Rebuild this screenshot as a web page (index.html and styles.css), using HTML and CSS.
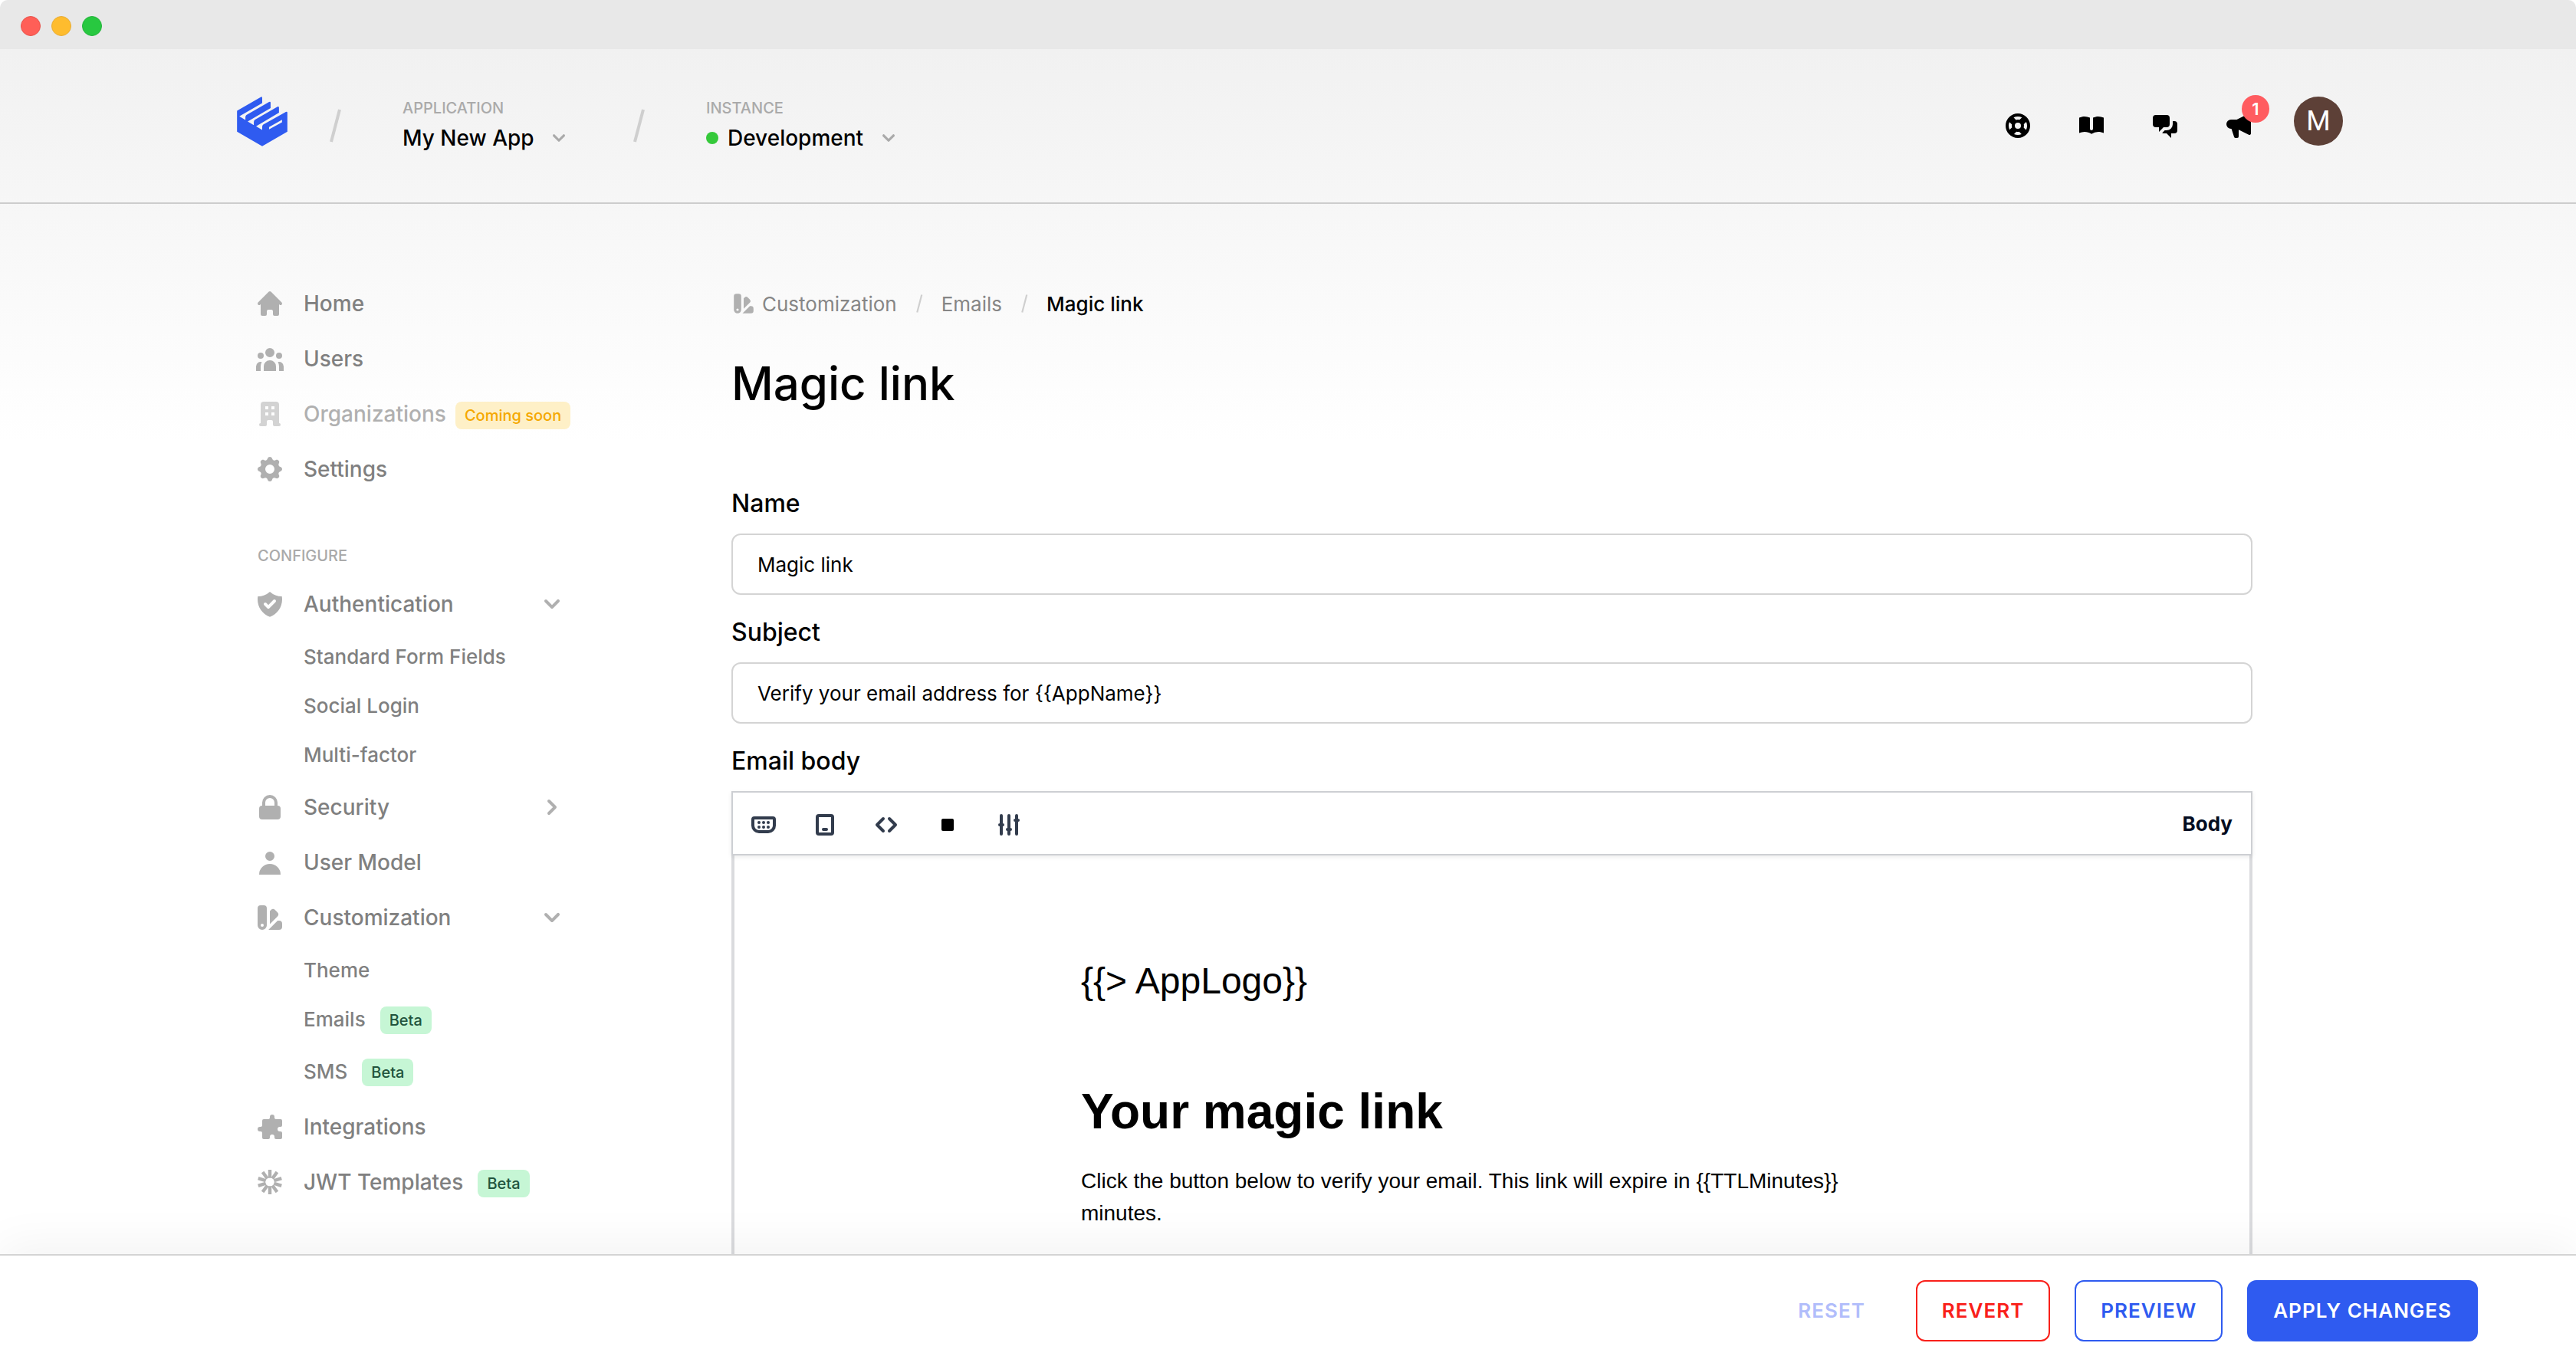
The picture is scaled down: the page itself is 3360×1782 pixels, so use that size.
FILE: index.html
```html
<!DOCTYPE html>
<html lang="en">
<head>
<meta charset="utf-8">
<title>Magic link</title>
<meta name="viewport" content="width=device-width, initial-scale=1">
<link rel="stylesheet" href="styles.css">
</head>
<body>
<svg class="sprite" aria-hidden="true">
  <symbol id="i-home" viewBox="0 0 20 20"><path d="M10.707 2.293a1 1 0 00-1.414 0l-7 7a1 1 0 001.414 1.414L4 10.414V17a1 1 0 001 1h2a1 1 0 001-1v-2a1 1 0 011-1h2a1 1 0 011 1v2a1 1 0 001 1h2a1 1 0 001-1v-6.586l.293.293a1 1 0 001.414-1.414l-7-7z"/></symbol>
  <symbol id="i-users" viewBox="0 0 20 20"><path d="M13 6a3 3 0 11-6 0 3 3 0 016 0zM18 8a2 2 0 11-4 0 2 2 0 014 0zM14 15a4 4 0 00-8 0v3h8v-3zM6 8a2 2 0 11-4 0 2 2 0 014 0zM16 18v-3a5.972 5.972 0 00-.75-2.906A3.005 3.005 0 0119 15v3h-3zM4.75 12.094A5.973 5.973 0 004 15v3H1v-3a3 3 0 013.75-2.906z"/></symbol>
  <symbol id="i-office" viewBox="0 0 20 20"><path fill-rule="evenodd" d="M4 4a2 2 0 012-2h8a2 2 0 012 2v12a1 1 0 110 2h-3a1 1 0 01-1-1v-2a1 1 0 00-1-1H9a1 1 0 00-1 1v2a1 1 0 01-1 1H4a1 1 0 110-2V4zm3 1h2v2H7V5zm2 4H7v2h2V9zm2-4h2v2h-2V5zm2 4h-2v2h2V9z"/></symbol>
  <symbol id="i-cog" viewBox="0 0 20 20"><path fill-rule="evenodd" d="M11.49 3.17c-.38-1.56-2.6-1.56-2.98 0a1.532 1.532 0 01-2.286.948c-1.372-.836-2.942.734-2.106 2.106.54.886.061 2.042-.947 2.287-1.561.379-1.561 2.6 0 2.978a1.532 1.532 0 01.947 2.287c-.836 1.372.734 2.942 2.106 2.106a1.532 1.532 0 012.287.947c.379 1.561 2.6 1.561 2.978 0a1.533 1.533 0 012.287-.947c1.372.836 2.942-.734 2.106-2.106a1.533 1.533 0 01.947-2.287c1.561-.379 1.561-2.6 0-2.978a1.532 1.532 0 01-.947-2.287c.836-1.372-.734-2.942-2.106-2.106a1.532 1.532 0 01-2.287-.947zM10 13a3 3 0 100-6 3 3 0 000 6z"/></symbol>
  <symbol id="i-shield" viewBox="0 0 20 20"><path fill-rule="evenodd" d="M2.166 4.999A11.954 11.954 0 0010 1.944 11.954 11.954 0 0017.834 5c.11.65.166 1.32.166 2.001 0 5.225-3.34 9.67-8 11.317C5.34 16.67 2 12.225 2 7c0-.682.057-1.35.166-2.001zm11.541 3.708a1 1 0 00-1.414-1.414L9 10.586 7.707 9.293a1 1 0 00-1.414 1.414l2 2a1 1 0 001.414 0l4-4z"/></symbol>
  <symbol id="i-lock" viewBox="0 0 20 20"><path fill-rule="evenodd" d="M5 9V7a5 5 0 0110 0v2a2 2 0 012 2v5a2 2 0 01-2 2H5a2 2 0 01-2-2v-5a2 2 0 012-2zm8-2v2H7V7a3 3 0 016 0z"/></symbol>
  <symbol id="i-user" viewBox="0 0 20 20"><path d="M10 9a3 3 0 100-6 3 3 0 000 6zm-7 9a7 7 0 1114 0H3z"/></symbol>
  <symbol id="i-swatch" viewBox="0 0 20 20"><path fill-rule="evenodd" d="M4 2a2 2 0 00-2 2v11a3 3 0 106 0V4a2 2 0 00-2-2H4zm1 14a1 1 0 100-2 1 1 0 000 2zm5-1.757l4.9-4.9a2 2 0 000-2.828L13.485 5.1a2 2 0 00-2.828 0L10 5.757v8.486zM16 18H9.071l6-6H16a2 2 0 012 2v2a2 2 0 01-2 2z"/></symbol>
  <symbol id="i-puzzle" viewBox="0 0 20 20"><path d="M10 3.5a1.5 1.5 0 013 0V4a1 1 0 001 1h3a1 1 0 011 1v3a1 1 0 01-1 1h-.5a1.5 1.5 0 000 3h.5a1 1 0 011 1v3a1 1 0 01-1 1h-3a1 1 0 01-1-1v-.5a1.5 1.5 0 00-3 0v.5a1 1 0 01-1 1H6a1 1 0 01-1-1v-3a1 1 0 00-1-1h-.5a1.5 1.5 0 010-3H4a1 1 0 001-1V6a1 1 0 011-1h3a1 1 0 001-1v-.5z"/></symbol>
  <symbol id="i-burst" viewBox="-10 -10 20 20"><g id="spokes" stroke="currentColor" stroke-width="2.2"><path d="M0-8V-2.6M0 8V2.6"/><path transform="rotate(36)" d="M0-8V-2.8M0 8V2.8"/><path transform="rotate(72)" d="M0-8V-2.8M0 8V2.8"/><path transform="rotate(108)" d="M0-8V-2.8M0 8V2.8"/><path transform="rotate(144)" d="M0-8V-2.8M0 8V2.8"/></g></symbol>
  <symbol id="i-down" viewBox="0 0 20 20"><path d="M5.293 7.293a1 1 0 011.414 0L10 10.586l3.293-3.293a1 1 0 111.414 1.414l-4 4a1 1 0 01-1.414 0l-4-4a1 1 0 010-1.414z"/></symbol>
  <symbol id="i-right" viewBox="0 0 20 20"><path d="M7.293 14.707a1 1 0 010-1.414L10.586 10 7.293 6.707a1 1 0 011.414-1.414l4 4a1 1 0 010 1.414l-4 4a1 1 0 01-1.414 0z"/></symbol>
  <symbol id="i-support" viewBox="0 0 20 20"><path fill-rule="evenodd" d="M18 10a8 8 0 11-16 0 8 8 0 0116 0zm-2 0c0 .993-.241 1.929-.668 2.754l-1.524-1.525a3.997 3.997 0 00.078-2.183l1.562-1.562C15.802 8.249 16 9.1 16 10zm-5.165 3.913l1.58 1.58A5.98 5.98 0 0110 16a5.976 5.976 0 01-2.516-.552l1.562-1.562a4.006 4.006 0 001.789.027zm-4.677-2.796a4.002 4.002 0 01-.041-2.08l-.08.08-1.53-1.533A5.98 5.98 0 004 10c0 .954.223 1.856.619 2.657l1.54-1.54zm1.088-6.45A5.974 5.974 0 0110 4c.954 0 1.856.223 2.657.619l-1.54 1.54a4.002 4.002 0 00-2.346.033L7.246 4.668zM12 10a2 2 0 11-4 0 2 2 0 014 0z"/></symbol>
  <symbol id="i-book" viewBox="0 0 20 20"><path d="M9 4.804A7.968 7.968 0 005.5 4c-1.255 0-2.443.29-3.5.804v10A7.969 7.969 0 015.5 14c1.669 0 3.218.51 4.5 1.385A7.962 7.962 0 0114.5 14c1.255 0 2.443.29 3.5.804v-10A7.968 7.968 0 0014.5 4c-1.255 0-2.443.29-3.5.804V12a1 1 0 11-2 0V4.804z"/></symbol>
  <symbol id="i-chat" viewBox="0 0 20 20"><path d="M2 5a2 2 0 012-2h7a2 2 0 012 2v4a2 2 0 01-2 2H9l-3 3v-3H4a2 2 0 01-2-2V5z"/><path d="M15 7v2a4 4 0 01-4 4H9.828l-1.766 1.767c.28.149.599.233.938.233h2l3 3v-3h2a2 2 0 002-2V9a2 2 0 00-2-2h-1z"/></symbol>
  <symbol id="i-news" viewBox="0 0 20 20"><path d="M18 3a1 1 0 00-1.447-.894L8.763 6H5a3 3 0 000 6h.28l1.771 5.316A1 1 0 008 18h1a1 1 0 001-1v-4.382l6.553 3.276A1 1 0 0018 15V3z"/></symbol>
  <symbol id="i-slash" viewBox="0 0 16 44"><path d="M14 1L3 43" fill="none" stroke="currentColor" stroke-width="4"/></symbol>
</svg>

<div class="titlebar" aria-hidden="true">
  <span class="light light-red"></span><span class="light light-yellow"></span><span class="light light-green"></span>
</div>

<div class="page">
  <header class="header">
    <div class="container header-row">
      <div class="header-left">
        <a class="logo" href="#" aria-label="Dashboard home">
          <svg viewBox="57 47 198 196"><path fill-rule="evenodd" d="M57 103L150 49Q156 46 156 52V73L66 125L90 139V128Q90 122 94 119L183 68Q189 65 189 71V92L99 145L123 159V147Q123 141 127 138L216 87Q222 85 222 90V110L132 164L156 178V166Q156 160 160 157L249 107Q255 105 255 110V185L156 242L57 185ZM183 167V176L234 148V138Z"/></svg>
        </a>
        <div class="context">
          <svg class="slash"><use href="#i-slash"/></svg>
          <div class="picker">
            <label class="overline" for="app">APPLICATION</label>
            <div class="picker-value">
              <select id="app"><option>My New App</option></select>
              <svg class="picker-chevron"><use href="#i-down"/></svg>
            </div>
          </div>
          <svg class="slash"><use href="#i-slash"/></svg>
          <div class="picker">
            <label class="overline" for="instance">INSTANCE</label>
            <div class="picker-value">
              <span class="status"></span>
              <select id="instance"><option>Development</option></select>
              <svg class="picker-chevron"><use href="#i-down"/></svg>
            </div>
          </div>
        </div>
      </div>
      <div class="header-right">
        <nav class="tools" aria-label="Resources">
          <a href="#" aria-label="Support"><svg class="icon"><use href="#i-support"/></svg></a>
          <a href="#" aria-label="Documentation"><svg class="icon"><use href="#i-book"/></svg></a>
          <a href="#" aria-label="Community"><svg class="icon"><use href="#i-chat"/></svg></a>
          <a class="news" href="#" aria-label="What's new"><svg class="icon"><use href="#i-news"/></svg><span class="count">1</span></a>
        </nav>
        <button class="avatar" type="button">M</button>
      </div>
    </div>
  </header>

  <div class="container layout">
    <nav class="sidebar" aria-label="Main">
      <a class="item" href="#"><svg class="icon"><use href="#i-home"/></svg>Home</a>
      <a class="item" href="#"><svg class="icon"><use href="#i-users"/></svg>Users</a>
      <a class="item item-soon" href="#"><svg class="icon"><use href="#i-office"/></svg><span class="soon-name">Organizations</span><span class="badge badge-soon">Coming soon</span></a>
      <a class="item" href="#"><svg class="icon"><use href="#i-cog"/></svg>Settings</a>
      <h2 class="overline section">CONFIGURE</h2>
      <a class="item" href="#"><svg class="icon"><use href="#i-shield"/></svg>Authentication<svg class="icon toggle"><use href="#i-down"/></svg></a>
      <div class="sub">
        <a class="subitem" href="#">Standard Form Fields</a>
        <a class="subitem" href="#">Social Login</a>
        <a class="subitem" href="#">Multi-factor</a>
      </div>
      <a class="item" href="#"><svg class="icon"><use href="#i-lock"/></svg>Security<svg class="icon toggle"><use href="#i-right"/></svg></a>
      <a class="item" href="#"><svg class="icon"><use href="#i-user"/></svg>User Model</a>
      <a class="item" href="#"><svg class="icon"><use href="#i-swatch"/></svg>Customization<svg class="icon toggle"><use href="#i-down"/></svg></a>
      <div class="sub">
        <a class="subitem" href="#">Theme</a>
        <a class="subitem subitem-badged" href="#">Emails<span class="badge badge-beta">Beta</span></a>
        <a class="subitem subitem-badged" href="#">SMS<span class="badge badge-beta">Beta</span></a>
      </div>
      <a class="item" href="#"><svg class="icon"><use href="#i-puzzle"/></svg>Integrations</a>
      <a class="item" href="#"><svg class="icon"><use href="#i-burst"/></svg>JWT Templates<span class="badge badge-beta">Beta</span></a>
    </nav>

    <main class="main">
      <nav class="crumbs" aria-label="Breadcrumb">
        <a class="crumb-root" href="#"><svg><use href="#i-swatch"/></svg>Customization</a>
        <svg class="crumb-slash"><use href="#i-slash"/></svg>
        <a href="#">Emails</a>
        <svg class="crumb-slash"><use href="#i-slash"/></svg>
        <span class="crumb-current">Magic link</span>
      </nav>
      <h1 class="title">Magic link</h1>

      <form class="form">
        <div class="field">
          <label for="name">Name</label>
          <input id="name" type="text" value="Magic link">
        </div>
        <div class="field">
          <label for="subject">Subject</label>
          <input id="subject" type="text" value="Verify your email address for {{AppName}}">
        </div>
        <div class="field">
          <span class="field-label" id="body-label">Email body</span>
          <div class="editor" role="group" aria-labelledby="body-label">
            <div class="toolbar">
              <div class="toolbar-buttons">
                <button type="button" aria-label="Insert variable"><svg viewBox="0 0 40 40"><path class="line" d="M8 11H32a2 2 0 012 2v8a8 8 0 01-8 8H14a8 8 0 01-8-8v-8a2 2 0 012-2z"/><circle cx="14" cy="17" r="2"/><circle cx="20" cy="17" r="2"/><circle cx="26" cy="17" r="2"/><circle cx="14" cy="23" r="2"/><circle cx="20" cy="23" r="2"/><circle cx="26" cy="23" r="2"/></svg></button>
                <button type="button" aria-label="Device"><svg viewBox="0 0 40 40"><rect class="line" x="10" y="8" width="20" height="24" rx="2"/><rect x="16" y="24" width="8" height="4" rx="2"/></svg></button>
                <button type="button" aria-label="Source"><svg viewBox="0 0 40 40"><path class="line" d="M16 12l-8 8 8 8M24 12l8 8-8 8"/></svg></button>
                <button class="solid" type="button" aria-label="Block"><svg viewBox="0 0 40 40"><rect x="12" y="12" width="16" height="16" rx="2"/></svg></button>
                <button type="button" aria-label="Settings"><svg viewBox="0 0 40 40"><path class="line" d="M10 8v24M20 8v24M30 8v24M8 20h4M18 26h4M28 14h4"/></svg></button>
              </div>
              <strong class="toolbar-target">Body</strong>
            </div>
            <div class="canvas">
              <div class="email">
                <p class="email-logo">{{&gt; AppLogo}}</p>
                <h2 class="email-title">Your magic link</h2>
                <p class="email-text">Click the button below to verify your email. This link will expire in {{TTLMinutes}} minutes.</p>
              </div>
            </div>
          </div>
        </div>
      </form>
    </main>
  </div>
</div>

<footer class="actions">
  <button class="btn btn-reset" type="button">RESET</button>
  <button class="btn btn-revert" type="button">REVERT</button>
  <button class="btn btn-preview" type="button">PREVIEW</button>
  <button class="btn btn-apply" type="button">APPLY CHANGES</button>
</footer>
</body>
</html>
```
FILE: styles.css
```css
* { box-sizing: border-box; }

body {
  margin: 0;
  height: 100vh;
  display: flex;
  flex-direction: column;
  overflow: hidden;
  background: #fff;
  color: #000;
  font-family: Inter, "Liberation Sans", sans-serif;
  font-size: 28px;
}

a { color: inherit; text-decoration: none; }
h1, h2, p { margin: 0; }
svg { display: block; fill: currentColor; }
button, input, select { font: inherit; }
.sprite { position: absolute; width: 0; height: 0; }
.icon { width: 40px; height: 40px; flex: none; }

/* Window chrome */
.titlebar {
  flex: none;
  height: 64px;
  padding: 3px 27px 0;
  display: flex;
  align-items: center;
  gap: 14px;
  background: #e8e8e8;
  border-radius: 10px 10px 0 0;
}
.light { width: 26px; height: 26px; border-radius: 50%; border: 1px solid; }
.light-red { background: #ff5f57; border-color: #e9524a; }
.light-yellow { background: #febc2e; border-color: #e8ad35; }
.light-green { background: #28c840; border-color: #24b43c; }

.page {
  flex: 1;
  min-height: 0;
  overflow: hidden;
  background: linear-gradient(#f1f1f1, #fff 512px);
}
.container { max-width: 2752px; margin: 0 auto; }

/* Header */
.header { border-bottom: 2px solid #cdcdcd; }
.header-row {
  height: 200px;
  padding: 0 0 12px 5px;
  display: flex;
  align-items: center;
  justify-content: space-between;
}
.header-left { display: flex; align-items: center; gap: 54px; }
.logo { color: #2f5bf0; }
.logo svg { width: 66px; height: 65px; }
.context { display: flex; align-items: center; gap: 80px; padding-top: 11px; }
.slash { width: 16px; height: 44px; color: #cfcfcf; }
.overline { font-size: 20px; line-height: 28px; font-weight: 500; color: #aaa; }
.picker { display: flex; flex-direction: column; gap: 5px; }
.picker-value { display: flex; align-items: center; height: 40px; }
.picker-value select {
  appearance: none;
  border: 0;
  padding: 0;
  background: none;
  color: #000;
  font-weight: 500;
  line-height: 40px;
}
.picker-chevron { width: 32px; height: 32px; margin-left: 16px; color: #aaa; }
.status { width: 16px; height: 16px; margin-right: 12px; border-radius: 50%; background: #35c93a; }
.header-right { display: flex; align-items: center; gap: 52px; }
.tools { display: flex; gap: 56px; padding-top: 12px; }
.news { position: relative; }
.count {
  position: absolute;
  left: 24px;
  top: -20px;
  width: 36px;
  height: 36px;
  border-radius: 50%;
  background: #ff5c60;
  color: #fff;
  font-size: 22px;
  font-weight: 600;
  line-height: 36px;
  text-align: center;
}
.avatar {
  width: 64px;
  height: 64px;
  padding: 0;
  border: 0;
  border-radius: 50%;
  background: #5d4037;
  color: #fff;
  font-family: Roboto, sans-serif;
  font-size: 36px;
}

/* Columns */
.layout {
  padding-top: 94px;
  display: grid;
  grid-template-columns: 650px minmax(0, 1984px);
}

/* Sidebar */
.sidebar { width: 440px; padding-left: 28px; color: #808080; }
.item { display: flex; align-items: center; height: 72px; font-weight: 500; white-space: nowrap; }
.item .icon { margin-right: 24px; color: #b0b0b0; }
.item .toggle { margin: 0 4px 0 auto; }
.item-soon .icon { opacity: .55; }
.soon-name { color: #b0b0b0; }
.section { padding: 63px 0 13px 4px; }
.sub { padding: 0 0 1px 64px; font-size: 26px; font-weight: 500; }
.subitem { display: flex; align-items: center; height: 64px; }
.subitem-badged { height: 68px; padding-bottom: 4px; }
.badge {
  height: 36px;
  margin: 4px 0 0 19px;
  padding: 0 12px;
  border-radius: 8px;
  font-size: 20px;
  font-weight: 500;
  line-height: 37px;
}
.badge-soon { margin-left: 12px; background: #fef0c7; color: #f5a800; }
.badge-beta { background: #c6f6d5; color: #22543d; }

/* Breadcrumb and title */
.crumbs { display: flex; align-items: center; height: 72px; gap: 24px; font-size: 26px; color: #868686; }
.crumb-root { display: flex; align-items: center; gap: 8px; }
.crumb-root svg { width: 32px; height: 32px; color: #b0b0b0; }
.crumb-slash { width: 10px; height: 24px; color: #cfcfcf; }
.crumb-current { color: #000; font-weight: 500; }
.title { margin-top: 28px; font-size: 60px; line-height: 80px; font-weight: 500; }

/* Form */
.form { margin-top: 96px; display: flex; flex-direction: column; gap: 28px; }
.field { display: flex; flex-direction: column; gap: 18px; }
.field label, .field-label { font-size: 32px; line-height: 42px; font-weight: 500; }
.field input {
  height: 80px;
  padding: 0 32px;
  border: 2px solid #d4d4d4;
  border-radius: 12px;
  background: #fff;
  color: #000;
  font-size: 26px;
}

/* Email editor */
.toolbar {
  position: relative;
  height: 84px;
  padding: 0 24px 0 20px;
  display: flex;
  align-items: center;
  justify-content: space-between;
  border: 2px solid #cdcfd3;
  background: #fff;
  box-shadow: 0 2px 6px rgba(0, 0, 0, .08);
}
.toolbar-buttons { display: flex; gap: 40px; padding-top: 4px; }
.toolbar button { padding: 0; border: 0; background: none; color: #323c4d; }
.toolbar button svg { width: 40px; height: 40px; }
.toolbar .solid { color: #000; }
.line { fill: none; stroke: currentColor; stroke-width: 4; stroke-linecap: round; stroke-linejoin: round; }
.toolbar-target { font-size: 26px; font-weight: 700; color: #040d21; }
.canvas { border: 4px solid #dadbde; border-top: 0; background: #fff; padding-bottom: 128px; }
.email {
  max-width: 1200px;
  margin: 0 auto;
  padding: 128px 64px 0;
  font-family: "Liberation Sans", Helvetica, Arial, sans-serif;
}
.email-logo { font-size: 48px; line-height: 72px; }
.email-title { margin-top: 96px; font-size: 64px; line-height: 76px; }
.email-text { margin-top: 32px; font-size: 28px; line-height: 42px; }

/* Action bar */
.actions {
  position: relative;
  flex: none;
  padding: 32px 128px;
  display: flex;
  justify-content: flex-end;
  gap: 32px;
  border-top: 2px solid #d4d4d4;
  background: #fff;
  box-shadow: 0 -12px 60px rgba(0, 0, 0, .05);
}
.btn {
  height: 80px;
  padding: 0 32px 2px;
  border: 2px solid transparent;
  border-radius: 12px;
  background: #fff;
  font-size: 26px;
  font-weight: 600;
  letter-spacing: 1px;
}
.btn-reset { color: #b1bdfb; }
.btn-revert { color: #f9201a; border-color: #f9201a; }
.btn-preview { color: #2f5bf0; border-color: #2f5bf0; }
.btn-apply { color: #fff; background: #2f5bf0; border-color: #2f5bf0; }
```
